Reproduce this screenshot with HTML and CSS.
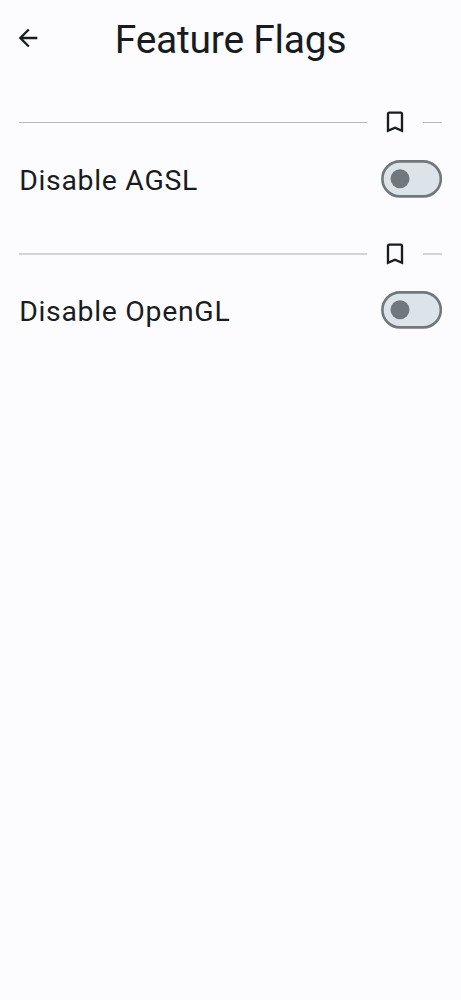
FILE: index.html
```html
<!DOCTYPE html>
<html lang="en">
<head>
<meta charset="utf-8">
<title>Feature Flags</title>
<link rel="stylesheet" href="styles.css">
</head>
<body>
<header class="top-bar">
  <button class="back" aria-label="Back"><svg viewBox="0 0 24 24"><path d="M20 11H7.83l5.59-5.59L12 4l-8 8 8 8 1.41-1.41L7.83 13H20z"/></svg></button>
  <h1 class="title">Feature Flags</h1>
</header>
<main class="flags">
  <section class="flag">
    <div class="divider"><svg class="bookmark" viewBox="0 0 24 24"><path d="M17 3H7c-1.1 0-2 .9-2 2v16l7-3 7 3V5c0-1.1-.9-2-2-2zm0 15l-5-2.18L7 18V5h10z"/></svg></div>
    <div class="row"><span class="label">Disable AGSL</span><svg class="switch" role="switch" aria-checked="false" viewBox="0 0 61 38"><rect class="track" x="1.4" y="1.4" width="58.4" height="35" rx="17.5"/><circle class="thumb" cx="19" cy="18.8" r="9.5"/></svg></div>
  </section>
  <section class="flag">
    <div class="divider divider-soft"><svg class="bookmark" viewBox="0 0 24 24"><path d="M17 3H7c-1.1 0-2 .9-2 2v16l7-3 7 3V5c0-1.1-.9-2-2-2zm0 15l-5-2.18L7 18V5h10z"/></svg></div>
    <div class="row"><span class="label">Disable OpenGL</span><svg class="switch" role="switch" aria-checked="false" viewBox="0 0 61 38"><rect class="track" x="1.4" y="1.4" width="58.4" height="35" rx="17.5"/><circle class="thumb" cx="19" cy="18.8" r="9.5"/></svg></div>
  </section>
</main>
</body>
</html>
```
FILE: styles.css
```css
* { box-sizing: border-box; }
body { margin: 0; min-height: 1000px; background: #fcfcff; color: #191c1e; font-family: Roboto, sans-serif; }
.top-bar { display: grid; grid-template-columns: 28px 1fr 28px; align-items: center; height: 80px; padding: 0 14px; }
.back { display: block; padding: 0; border: 0; background: none; width: 28px; height: 28px; margin-top: -5px; }
.back svg { display: block; width: 28px; height: 28px; fill: #191c1e; }
.title { margin: 0; text-align: center; font-size: 39px; line-height: 46px; font-weight: 400; letter-spacing: -0.25px; }
.flags { padding: 28px 19px 0; }
.flag { height: 131.5px; }
.divider { display: flex; align-items: center; gap: 14px; height: 28px; }
.divider::before, .divider::after { content: ""; height: 1px; background: #b4b8bc; }
.divider::before { flex: 1; }
.divider::after { width: 19px; }
.divider-soft::before, .divider-soft::after { height: 2px; background: #d2d3d6; }
.bookmark { width: 28px; height: 28px; fill: #191c1e; }
.row { display: flex; align-items: center; justify-content: space-between; height: 38px; margin-top: 23.6px; }
.label { font-size: 28.4px; line-height: 38px; letter-spacing: 0.7px; padding: 4px 0 0 0.2px; }
.switch { width: 61px; height: 38px; }
.track { fill: #dce3e9; stroke: #70787d; stroke-width: 2.6px; }
.thumb { fill: #70787d; }
```
